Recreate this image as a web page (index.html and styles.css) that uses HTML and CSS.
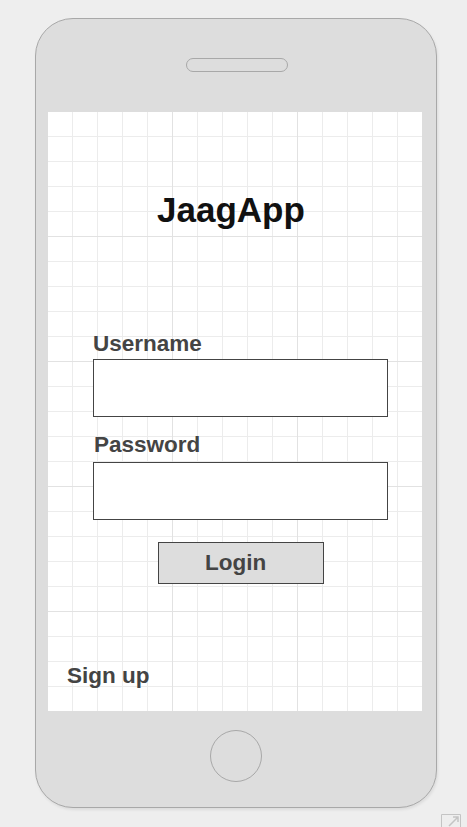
FILE: index.html
```html
<!DOCTYPE html>
<html>
<head>
<meta charset="utf-8">
<title>JaagApp</title>
<link rel="stylesheet" href="styles.css">
</head>
<body>
<div class="phone">
  <div class="speaker"></div>
  <div class="screen">
    <div class="title">JaagApp</div>
    <div class="form">
      <div class="label">Username</div>
      <div class="field"></div>
      <div class="label label-pw">Password</div>
      <div class="field field-pw"></div>
      <div class="login">Login</div>
    </div>
    <div class="signup">Sign up</div>
  </div>
  <div class="home"></div>
</div>
<svg class="expand" width="22" height="14" viewBox="0 0 22 14">
  <path d="M1.5 14 V1.5 H20.5 V14" fill="none" stroke="#c4c4c4" stroke-width="1"/>
  <path d="M9 13 L18 4 M13 4 H18 V9" fill="none" stroke="#c4c4c4" stroke-width="1.5"/>
</svg>
</body>
</html>
```
FILE: styles.css
```css
html, body {
  margin: 0;
  padding: 0;
}
body {
  background: #eeeeee;
  font-family: "Liberation Sans", Arial, sans-serif;
  width: 467px;
  height: 827px;
  position: relative;
  overflow: hidden;
}
.phone {
  box-sizing: border-box;
  margin: 18px 0 0 35px;
  width: 402px;
  height: 790px;
  background: #dddddd;
  border: 1px solid #a8a8a8;
  border-radius: 38px;
  box-shadow: 1px 2px 3px rgba(0, 0, 0, 0.08);
  display: flex;
  flex-direction: column;
  align-items: center;
  padding-top: 39px;
}
.speaker {
  box-sizing: border-box;
  width: 102px;
  height: 14px;
  border: 1px solid #a8a8a8;
  border-radius: 7px;
  margin-left: 2px;
}
.screen {
  align-self: flex-start;
  margin: 40px 0 0 12px;
  width: 374px;
  height: 599px;
  background-color: #ffffff;
  background-image:
    linear-gradient(to right, transparent 124px, #e2e2e2 124px),
    linear-gradient(to bottom, transparent 124px, #e2e2e2 124px),
    linear-gradient(to right, transparent 24px, #ececec 24px),
    linear-gradient(to bottom, transparent 24px, #ececec 24px);
  background-size: 125px 125px, 125px 125px, 25px 25px, 25px 25px;
  display: flex;
  flex-direction: column;
}
.title {
  margin-top: 81px;
  padding-left: 109px;
  font-size: 35px;
  line-height: 34px;
  font-weight: bold;
  color: #111111;
}
.form {
  margin: 106px 0 0 45px;
  display: flex;
  flex-direction: column;
  align-items: flex-start;
}
.label {
  font-size: 22.5px;
  line-height: 22px;
  font-weight: bold;
  color: #444444;
}
.label-pw {
  margin: 17px 0 0 1px;
}
.field {
  box-sizing: border-box;
  width: 295px;
  height: 58px;
  border: 1px solid #444444;
  background: #ffffff;
  margin-top: 4px;
}
.field-pw {
  margin-top: 6px;
}
.login {
  box-sizing: border-box;
  margin: 22px 0 0 65px;
  width: 166px;
  height: 42px;
  border: 1px solid #444444;
  background: #dddddd;
  padding-left: 46px;
  font-size: 22.5px;
  line-height: 40px;
  font-weight: bold;
  color: #444444;
}
.signup {
  margin: 81px 0 0 19px;
  font-size: 22.5px;
  line-height: 22px;
  font-weight: bold;
  color: #444444;
}
.home {
  box-sizing: border-box;
  margin-top: 19px;
  width: 52px;
  height: 52px;
  border: 1px solid #a8a8a8;
  border-radius: 50%;
}
.expand {
  position: absolute;
  left: 440px;
  top: 813px;
}
```
